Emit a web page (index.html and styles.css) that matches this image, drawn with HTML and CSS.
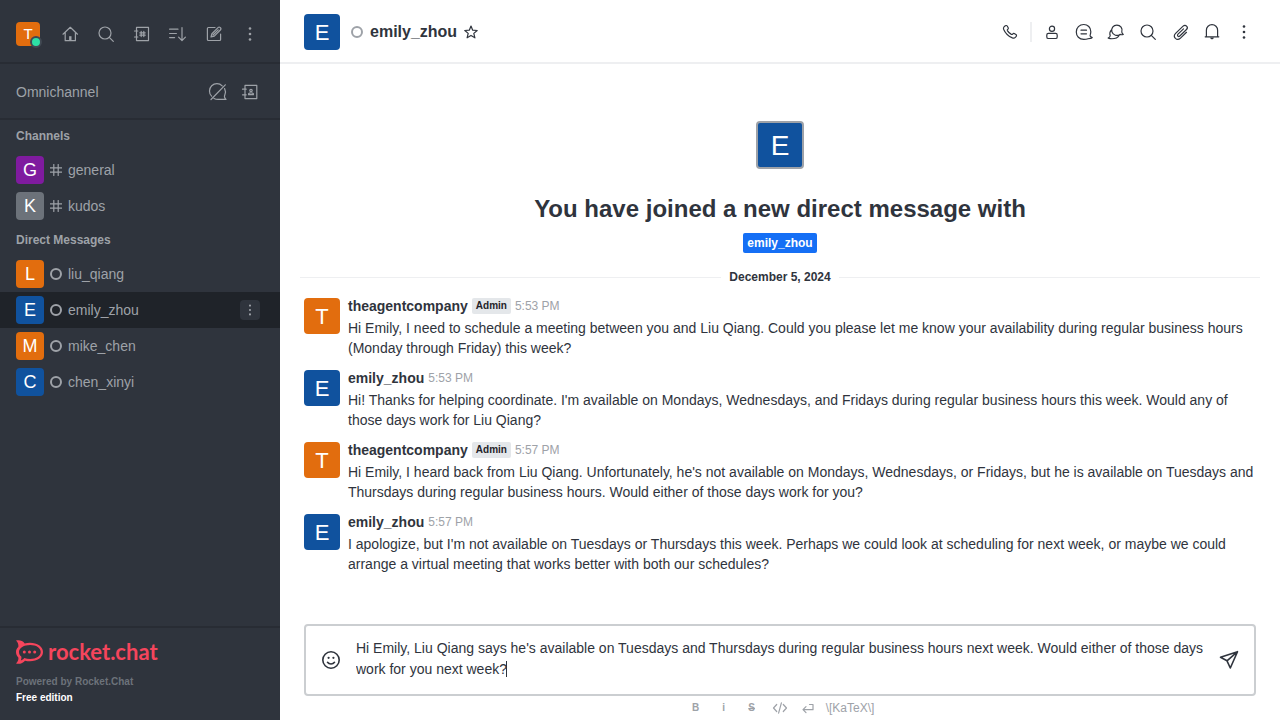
FILE: index.html
```html
<!DOCTYPE html>
<html lang="en">
<head>
<meta charset="utf-8">
<meta name="viewport" content="width=device-width, initial-scale=1">
<title>emily_zhou - Rocket.Chat</title>
<link rel="stylesheet" href="styles.css">
</head>
<body>
<svg class="sprite" aria-hidden="true">
  <symbol id="home" viewBox="0 0 20 20"><path d="M3 10.2 10.3 3.3l7.2 6.9M5.2 8.4v8.3h10.2V8.4"/><path d="M9.1 16.5v-4.3h2.4v4.3z" class="fill"/></symbol>
  <symbol id="search" viewBox="0 0 20 20"><circle cx="9" cy="9" r="6"/><path d="m13.3 13.3 4 4"/></symbol>
  <symbol id="directory" viewBox="0 0 20 20"><path d="M4.5 3.4h12v13.2h-12zM2.5 7h3.3M2.5 13h3.3M9.2 7.4v5.2M11.8 7.4v5.2M7.8 8.8h5.4M7.8 11.2h5.4"/></symbol>
  <symbol id="sort" viewBox="0 0 20 20"><path d="M1.6 5.2H10M1.6 9.5h6.8M1.6 13.6h5M14 3.5v13M10.6 13.2l3.4 3.4 3.4-3.4"/></symbol>
  <symbol id="edit" viewBox="0 0 20 20"><path d="M11 3.5H4.4a1 1 0 0 0-1 1v11a1 1 0 0 0 1 1h11.2a1 1 0 0 0 1-1V10M7 13l.9-3.3 6.4-6.3a1.2 1.2 0 0 1 1.7 0l.6.6a1.2 1.2 0 0 1 0 1.7l-6.3 6.4zM9 11l5.2-5.2"/></symbol>
  <symbol id="kebab" viewBox="0 0 20 20"><g class="fill"><circle cx="10" cy="4.5" r="1.3"/><circle cx="10" cy="10" r="1.3"/><circle cx="10" cy="15.5" r="1.3"/></g></symbol>
  <symbol id="chat-off" viewBox="0 0 20 20"><path d="M14.2 3.8A7.4 7.4 0 0 0 3.6 14.2M6 16.5c1.2.6 2.500.9 4 .9h8c-1-.8-1.400-1.500-1.500-2.500-.2-.7 0-1.200.3-2 .9-2.200.8-4.500-.2-6.300M3 17.500 17.300 2.800"/></symbol>
  <symbol id="contacts" viewBox="0 0 20 20"><path d="M5 3.400h11.800v13.200H5zM2.500 7.200h3.700M2.500 12.800h3.700"/><circle cx="11" cy="8.600" r="1.200"/><path d="M8.600 12.700v-1l1-.7h2.800l1 .7v1z"/></symbol>
  <symbol id="hash" viewBox="0 0 12 12"><path d="M3.800.5v11M8.200.5v11M0 3.800h12M0 8.200h12"/></symbol>
  <symbol id="star" viewBox="0 0 16 16"><path d="m8 2 1.700 4.200 4.500.3-3.400 2.900 1.100 4.400L8 11.400l-3.900 2.400 1.100-4.400-3.400-2.900 4.500-.3z"/></symbol>
  <symbol id="phone" viewBox="0 0 20 20"><path d="m4 4.900 1.300-1.100a1.300 1.300 0 0 1 1.900.2l1 1.700c.3.600.1 1.100-.4 1.500-.6.400-.7.800-.4 1.400 1 1.700 2.300 2.900 4 3.800.500.200.9.100 1.200-.3.500-.7 1-.8 1.700-.5l1.600.9c.7.500.8 1.200.3 1.800l-.9 1c-.7.800-1.700 1-2.900.6C8.500 14.400 5.300 11.300 3.600 7.300c-.3-.9-.2-1.700.4-2.400z"/></symbol>
  <symbol id="user" viewBox="0 0 20 20"><circle cx="10" cy="6.800" r="2.600"/><rect x="4.800" y="11.300" width="10.400" height="5.200" rx="1.600"/></symbol>
  <symbol id="thread" viewBox="0 0 20 20"><path d="M9.800 2.500c4 0 7 3 7 7 0 1.300-.1 2-.5 3-.4.900-.3 1.500.2 2.100l1.700.9c-.5.600-1 .8-1.800.8-.9 0-1.500.1-2.300.4-1.300.5-2.600.7-4.300.7-4.600 0-7.500-3.200-7.500-7.500 0-4.300 3.100-7.400 7.500-7.400zM7 8.200h5.500M7 11.800h5.500"/></symbol>
  <symbol id="discussion" viewBox="0 0 20 20"><path d="M15.800 9.900c0 1.100.5 1.800 1.500 2.600-1.300.4-2.300.3-3.300-.1a5.200 5.200 0 1 1 1.800-2.500zM5.400 7.900c-1.500 1.700-1.900 3.800-1.200 5.800-.1 1-.9 1.800-2 2.400.8.700 1.500.6 2.600.6 3.900.2 6.700-.3 8.400-3.500"/></symbol>
  <symbol id="clip" viewBox="0 0 20 20"><path d="m16.500 10.300-6 5.800c-1.600 1.500-3.700 1.600-5.100.3-1.300-1.400-1.300-3.500.2-5l7.500-7.300c1.100-1 2.600-1 3.500 0 .9.900.9 2.400-.1 3.400l-6.700 6.500c-.6.600-1.400.6-1.900.1s-.5-1.300.1-1.900l5.500-5.300"/></symbol>
  <symbol id="bell" viewBox="0 0 20 20"><path d="M4.400 14.400V8.200a5.600 5.600 0 0 1 11.200 0v6.200M3.200 14.800h13.600"/><path d="M8.200 15.500h3.600v.8L10 17.500l-1.800-1.200z" class="fill"/></symbol>
  <symbol id="smile" viewBox="0 0 20 20"><circle cx="10" cy="10" r="8.200"/><path d="M6.500 12.300c1.600 2.300 5.400 2.300 7 0"/><g class="fill"><circle cx="7.600" cy="7.800" r="1.100"/><circle cx="12.400" cy="7.800" r="1.100"/></g></symbol>
  <symbol id="send" viewBox="0 0 20 20"><path d="M18.500 1.700 1.500 7.300 8 10.800l3.300 7.200zM8 10.800l10.500-9.100"/></symbol>
  <symbol id="code" viewBox="0 0 16 16"><path d="M4.700 4.500 1.500 8l3.200 3.500M11.300 4.500 14.500 8l-3.200 3.500M9.400 2.800 6.600 13.200"/></symbol>
  <symbol id="enter" viewBox="0 0 16 16"><path d="M9.500 4.500H13v5.200H3.200M6 6.700 3 9.700l3 3"/></symbol>
</svg>

<div class="app">
  <nav class="sidebar" aria-label="Sidebar">
    <header class="toolbar">
      <button class="profile" aria-label="Profile"><span class="avatar avatar-24 orange">T</span><span class="online"></span></button>
      <button class="icon-button" aria-label="Home"><svg><use href="#home"/></svg></button>
      <button class="icon-button" aria-label="Search"><svg><use href="#search"/></svg></button>
      <button class="icon-button" aria-label="Directory"><svg><use href="#directory"/></svg></button>
      <button class="icon-button" aria-label="Display"><svg><use href="#sort"/></svg></button>
      <button class="icon-button" aria-label="Create new"><svg><use href="#edit"/></svg></button>
      <button class="icon-button" aria-label="More"><svg><use href="#kebab"/></svg></button>
    </header>
    <section class="omnichannel">
      <span class="omni-title">Omnichannel</span>
      <button class="icon-button" aria-label="Not available"><svg><use href="#chat-off"/></svg></button>
      <button class="icon-button" aria-label="Contact center"><svg><use href="#contacts"/></svg></button>
    </section>
    <div class="rooms">
      <h2 class="group">Channels</h2>
      <a class="room" href="#general"><span class="avatar avatar-28 purple">G</span><svg class="hash"><use href="#hash"/></svg><span class="room-name">general</span></a>
      <a class="room" href="#kudos"><span class="avatar avatar-28 gray">K</span><svg class="hash"><use href="#hash"/></svg><span class="room-name">kudos</span></a>
      <h2 class="group">Direct Messages</h2>
      <a class="room" href="#liu"><span class="avatar avatar-28 orange">L</span><span class="status"></span><span class="room-name">liu_qiang</span></a>
      <div class="room active"><a class="room-link" href="#emily"><span class="avatar avatar-28 blue">E</span><span class="status"></span><span class="room-name">emily_zhou</span></a><button class="room-menu" aria-label="Options"><svg><use href="#kebab"/></svg></button></div>
      <a class="room" href="#mike"><span class="avatar avatar-28 orange">M</span><span class="status"></span><span class="room-name">mike_chen</span></a>
      <a class="room" href="#chen"><span class="avatar avatar-28 blue">C</span><span class="status"></span><span class="room-name">chen_xinyi</span></a>
    </div>
    <footer class="brand">
      <a class="logo" href="#home-page">
        <svg class="logo-mark" viewBox="0 0 27 24" aria-hidden="true"><path fill-rule="evenodd" d="M0 .5C3-.5 7 .7 8.700 3.400 10.300 3 12 2.700 14 2.700c7.200 0 13 3.800 13 9.300s-5.800 9.300-13 9.300c-1.800 0-3.400-.2-5-.6C7 23.200 3.500 24.500 0 23.500c2-2 2.700-4.200 2.300-6C.8 16 0 14 0 12s.8-3.700 2.300-5C2.700 4.800 2 2.400 0 .5zM14.200 5C8 5 3 7.800 3 12c0 2 1 3.500 2.300 4.600.3 1.400.1 2.600-.5 3.900 1.500-.4 2.500-1.200 3.400-2.500 1.800.6 3.800.9 6 .9 6 0 10.500-2.700 10.500-6.900S20.200 5 14.200 5z"/><circle cx="8.300" cy="12" r="1.500"/><circle cx="13.500" cy="12" r="1.500"/><circle cx="18.700" cy="12" r="1.500"/></svg>
        <span>rocket.chat</span>
      </a>
      <div class="powered">Powered by Rocket.Chat</div>
      <div class="edition">Free edition</div>
    </footer>
  </nav>

  <main class="main">
    <header class="room-header">
      <span class="avatar avatar-36 blue">E</span>
      <span class="status"></span>
      <h1 class="title">emily_zhou</h1>
      <button class="star" aria-label="Favorite"><svg><use href="#star"/></svg></button>
      <div class="actions">
        <button class="icon-button" aria-label="Call"><svg><use href="#phone"/></svg></button>
        <span class="separator"></span>
        <button class="icon-button" aria-label="User info"><svg><use href="#user"/></svg></button>
        <button class="icon-button" aria-label="Threads"><svg><use href="#thread"/></svg></button>
        <button class="icon-button" aria-label="Discussions"><svg><use href="#discussion"/></svg></button>
        <button class="icon-button" aria-label="Search messages"><svg><use href="#search"/></svg></button>
        <button class="icon-button" aria-label="Files"><svg><use href="#clip"/></svg></button>
        <button class="icon-button" aria-label="Notifications"><svg><use href="#bell"/></svg></button>
        <button class="icon-button" aria-label="Options"><svg><use href="#kebab"/></svg></button>
      </div>
    </header>

    <section class="messages">
      <div class="intro">
        <span class="avatar avatar-48 blue">E</span>
        <h2 class="intro-title">You have joined a new direct message with</h2>
        <a class="user-tag" href="#emily">emily_zhou</a>
      </div>
      <div class="day"><span>December 5, 2024</span></div>
      <article class="message">
        <span class="avatar avatar-36 orange">T</span>
        <div class="message-content">
          <div class="message-head"><strong>theagentcompany</strong><span class="role">Admin</span><time>5:53 PM</time></div>
          <p>Hi Emily, I need to schedule a meeting between you and Liu Qiang. Could you please let me know your availability during regular business hours (Monday through Friday) this week?</p>
        </div>
      </article>
      <article class="message">
        <span class="avatar avatar-36 blue">E</span>
        <div class="message-content">
          <div class="message-head"><strong>emily_zhou</strong><time>5:53 PM</time></div>
          <p>Hi! Thanks for helping coordinate. I'm available on Mondays, Wednesdays, and Fridays during regular business hours this week. Would any of those days work for Liu Qiang?</p>
        </div>
      </article>
      <article class="message">
        <span class="avatar avatar-36 orange">T</span>
        <div class="message-content">
          <div class="message-head"><strong>theagentcompany</strong><span class="role">Admin</span><time>5:57 PM</time></div>
          <p>Hi Emily, I heard back from Liu Qiang. Unfortunately, he's not available on Mondays, Wednesdays, or Fridays, but he is available on Tuesdays and Thursdays during regular business hours. Would either of those days work for you?</p>
        </div>
      </article>
      <article class="message">
        <span class="avatar avatar-36 blue">E</span>
        <div class="message-content">
          <div class="message-head"><strong>emily_zhou</strong><time>5:57 PM</time></div>
          <p>I apologize, but I'm not available on Tuesdays or Thursdays this week. Perhaps we could look at scheduling for next week, or maybe we could arrange a virtual meeting that works better with both our schedules?</p>
        </div>
      </article>
    </section>

    <footer class="composer-area">
      <div class="composer">
        <button class="composer-button" aria-label="Emoji"><svg class="emoji"><use href="#smile"/></svg></button>
        <div class="field">
          <textarea class="input" rows="2" aria-label="Message emily_zhou" spellcheck="false">Hi Emily, Liu Qiang says he's available on Tuesdays and Thursdays during regular business hours next week. Would either of those days work for you next week?</textarea>
          <span class="caret"></span>
        </div>
        <button class="composer-button" aria-label="Send"><svg><use href="#send"/></svg></button>
      </div>
      <div class="format">
        <button class="format-button bold">B</button>
        <button class="format-button bold">i</button>
        <button class="format-button bold strike">S</button>
        <button class="format-button" aria-label="Code"><svg><use href="#code"/></svg></button>
        <button class="format-button" aria-label="Multiline"><svg><use href="#enter"/></svg></button>
        <a class="katex" href="#katex">\[KaTeX\]</a>
      </div>
    </footer>
  </main>
</div>
</body>
</html>
```

FILE: styles.css
```css
* { box-sizing: border-box; }

body {
  margin: 0;
  font: 14px/20px "Liberation Sans", Arial, sans-serif;
  color: #2f343d;
  background: #fff;
}

h1, h2, p { margin: 0; }
a { color: inherit; text-decoration: none; }
button { padding: 0; border: 0; background: none; color: inherit; font: inherit; }
svg { fill: none; stroke: currentColor; stroke-width: 1.2; stroke-linejoin: round; stroke-linecap: round; }
.fill { fill: currentColor; stroke: none; }
.sprite { position: absolute; width: 0; height: 0; }

.app { display: flex; min-height: 100vh; }

/* Avatars and presence */
.avatar {
  display: flex;
  flex: none;
  align-items: center;
  justify-content: center;
  border-radius: 4px;
  color: #fff;
}
.avatar-24 { width: 24px; height: 24px; font-size: 15px; }
.avatar-28 { width: 28px; height: 28px; font-size: 18px; }
.avatar-36 { width: 36px; height: 36px; padding-top: 2px; font-size: 22px; }
.avatar-48 { width: 48px; height: 48px; padding-top: 2px; font-size: 28px; border: 2px solid #9ea2a8; }
.orange { background: #e26d0e; }
.blue { background: #10529e; }
.purple { background: #7f1b9f; }
.gray { background: #6c727a; }
.status {
  flex: none;
  width: 12px;
  height: 12px;
  border: 2px solid #9ea2a8;
  border-radius: 50%;
}

.icon-button {
  display: flex;
  flex: none;
  align-items: center;
  justify-content: center;
  width: 28px;
  height: 28px;
}
.icon-button svg { width: 20px; height: 20px; }

/* Sidebar */
.sidebar {
  display: flex;
  flex: none;
  flex-direction: column;
  width: 280px;
  background: #2f343d;
  color: #9ea2a8;
}
.toolbar {
  display: flex;
  align-items: center;
  gap: 8px;
  height: 64px;
  padding: 6px 16px 0;
  border-bottom: 2px solid #282c34;
}
.profile { position: relative; margin-right: 8px; }
.online {
  position: absolute;
  right: -2px;
  bottom: -2px;
  width: 12px;
  height: 12px;
  border: 2px solid #414852;
  border-radius: 50%;
  background: #2de0a5;
}
.omnichannel {
  display: flex;
  align-items: center;
  gap: 4px;
  height: 56px;
  padding: 2px 16px 0;
  border-bottom: 2px solid #282c34;
}
.omni-title { flex: 1; }
.rooms { flex: 1; }
.group { padding: 6px 16px; font-size: 12px; line-height: 20px; }
.room {
  display: flex;
  align-items: center;
  gap: 6px;
  height: 36px;
  padding: 0 16px;
}
.room-link { display: flex; flex: 1; align-items: center; gap: 6px; }
.active { padding-right: 20px; background: #1f2329; }
.hash { width: 12px; height: 12px; }
.room-menu {
  display: flex;
  align-items: center;
  justify-content: center;
  width: 20px;
  height: 20px;
  border-radius: 4px;
  background: #2f343d;
}
.room-menu svg { width: 16px; height: 16px; }
.brand { padding: 12px 16px 14px; border-top: 2px solid #282c34; }
.logo {
  display: flex;
  align-items: center;
  gap: 5px;
  margin-bottom: 10px;
  color: #f5455c;
  font: bold 22px/24px Lato, sans-serif;
}
.logo-mark { width: 27px; height: 24px; fill: currentColor; stroke: none; }
.powered, .edition { font-size: 10px; font-weight: bold; line-height: 16px; }
.powered { color: #6c727a; }
.edition { color: #fff; }

/* Room header */
.main { display: flex; flex: 1; flex-direction: column; min-width: 0; }
.room-header {
  display: flex;
  align-items: center;
  height: 64px;
  padding: 2px 22px 0 24px;
  border-bottom: 2px solid #eeeff1;
}
.room-header .status { margin: 0 7px 0 11px; }
.title { font-size: 16px; line-height: 24px; }
.star { display: flex; margin-left: 6px; }
.star svg { width: 16px; height: 16px; }
.actions { display: flex; align-items: center; gap: 4px; margin-left: auto; }
.separator { width: 2px; height: 20px; margin: 0 2px; background: #eeeff1; }

/* Messages */
.messages { flex: 1; padding: 57px 20px 20px; }
.intro { display: flex; flex-direction: column; align-items: center; }
.intro-title { margin: 24px 0 8px; font-size: 24px; line-height: 32px; text-align: center; }
.user-tag {
  padding: 0 4px;
  border-radius: 2px;
  background: #156ff5;
  color: #fff;
  font-size: 12px;
  font-weight: bold;
}
.day {
  display: flex;
  align-items: center;
  gap: 8px;
  margin: 14px 0 9px;
  font-size: 12px;
  font-weight: bold;
}
.day::before, .day::after { content: ""; flex: 1; height: 1px; background: #eeeff1; }
.message { display: flex; gap: 8px; padding: 0 4px 12px; }
.message-content { flex: 1; min-width: 0; }
.message .avatar { margin-top: 2px; }
.message-head { display: flex; align-items: center; gap: 4px; margin-bottom: 2px; line-height: 20px; }
.message-head strong { font-size: 14px; }
.message p { margin-bottom: -2px; }
.role {
  padding: 0 4px;
  border-radius: 2px;
  background: #e4e7ea;
  color: #1f2329;
  font-size: 10px;
  font-weight: bold;
  line-height: 16px;
}
time { color: #9ea2a8; font-size: 12px; }

/* Composer */
.composer-area { padding: 0 24px; }
.composer {
  display: flex;
  align-items: center;
  padding: 12px 11px;
  border: 2px solid #cbced1;
  border-radius: 4px;
}
.composer-button { display: flex; flex: none; align-items: center; justify-content: center; width: 28px; height: 28px; }
.composer-button svg { width: 20px; height: 20px; stroke-width: 1.6; }
.field { position: relative; flex: 1; margin: 0 0 0 11px; }
.input {
  display: block;
  width: 100%;
  height: 44px;
  padding: 0;
  border: 0;
  outline: 0;
  resize: none;
  overflow: hidden;
  background: none;
  color: inherit;
  font: 14px/21px "Liberation Sans", Arial, sans-serif;
}
.caret { position: absolute; left: 150px; top: 23px; width: 1px; height: 16px; background: #2f343d; }
.format { display: flex; align-items: center; justify-content: center; height: 24px; color: #9ea2a8; }
.format-button { display: flex; align-items: center; justify-content: center; width: 28px; height: 24px; font-size: 10px; }
.format-button svg { width: 16px; height: 16px; }
.bold { font-weight: bold; }
.strike { text-decoration: line-through; }
.katex { padding: 0 4px; font-size: 12px; }
```
